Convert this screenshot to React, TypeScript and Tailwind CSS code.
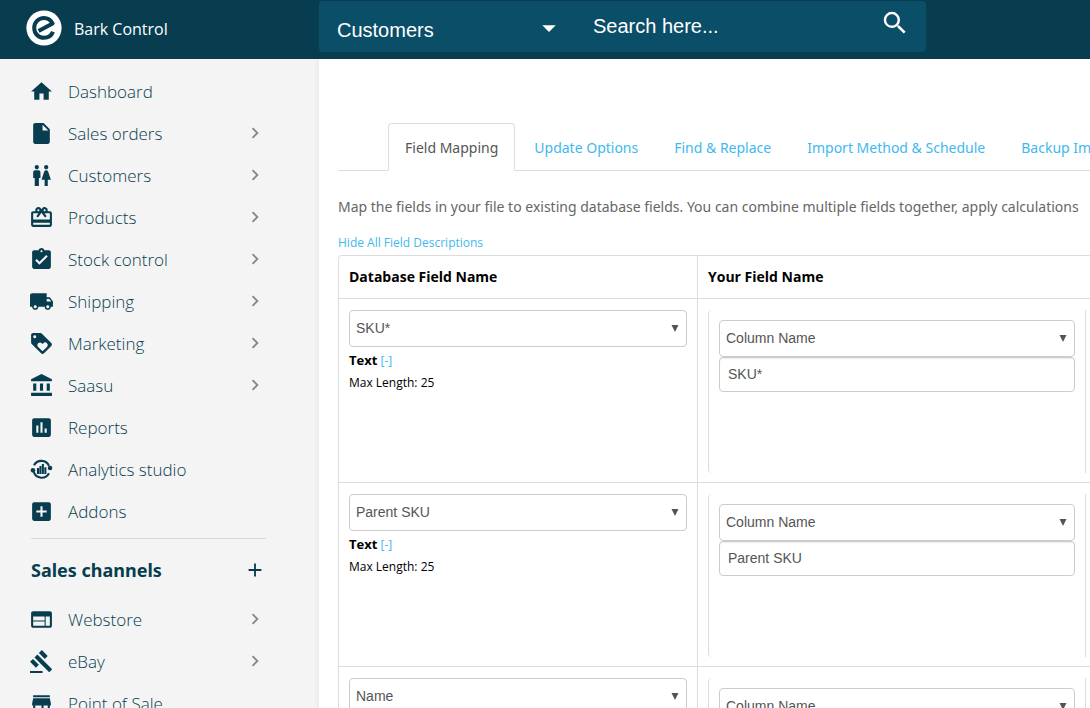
import type { ReactNode } from 'react';
import type { IconType } from 'react-icons';
import {
  MdAccountBalance,
  MdAdd,
  MdAddBox,
  MdArrowDropDown,
  MdAssessment,
  MdAssignmentTurnedIn,
  MdGavel,
  MdHome,
  MdInsertDriveFile,
  MdKeyboardArrowRight,
  MdLocalShipping,
  MdLoyalty,
  MdRedeem,
  MdSearch,
  MdStore,
  MdWc,
  MdWeb,
} from 'react-icons/md';

type NavItem = {
  label: string;
  icon: IconType | typeof AnalyticsIcon;
  expandable?: boolean;
};

const AnalyticsIcon = ({ className }: { className?: string }) => (
  <svg viewBox="0 0 24 24" className={className} aria-hidden>
    <g fill="none" stroke="currentColor" strokeWidth="2">
      <path d="M4.8 7.9A8 8 0 0 1 19.2 8.6" />
      <path d="M19.2 15.6A8 8 0 0 1 4.6 14.6" />
    </g>
    <circle cx="3.8" cy="12.8" r="2.2" fill="currentColor" />
    <circle cx="20.2" cy="10.6" r="2.2" fill="currentColor" />
    <path
      fill="currentColor"
      d="M7.6 10.6h2.1v5.8H7.6zM10 8.6h1.9v7.8H10zM12.3 6.6h2v9.8h-2zM14.7 9.8h2v6.6h-2z"
    />
  </svg>
);

const MAIN_NAV: NavItem[] = [
  { label: 'Dashboard', icon: MdHome },
  { label: 'Sales orders', icon: MdInsertDriveFile, expandable: true },
  { label: 'Customers', icon: MdWc, expandable: true },
  { label: 'Products', icon: MdRedeem, expandable: true },
  { label: 'Stock control', icon: MdAssignmentTurnedIn, expandable: true },
  { label: 'Shipping', icon: MdLocalShipping, expandable: true },
  { label: 'Marketing', icon: MdLoyalty, expandable: true },
  { label: 'Saasu', icon: MdAccountBalance, expandable: true },
  { label: 'Reports', icon: MdAssessment },
  { label: 'Analytics studio', icon: AnalyticsIcon },
  { label: 'Addons', icon: MdAddBox },
];

const CHANNEL_NAV: NavItem[] = [
  { label: 'Webstore', icon: MdWeb, expandable: true },
  { label: 'eBay', icon: MdGavel, expandable: true },
  { label: 'Point of Sale', icon: MdStore },
];

const TABS = [
  'Field Mapping',
  'Update Options',
  'Find & Replace',
  'Import Method & Schedule',
  'Backup Import Data',
];

const FIELDS = ['SKU*', 'Parent SKU', 'Name'];

const Logo = () => (
  <svg viewBox="0 0 36 36" className="size-9 shrink-0" aria-hidden>
    <circle cx="18" cy="18" r="17.6" fill="#fff" />
    <path
      d="M12.6 20.9L26.6 13.4C24.4 9.6 21.4 8 18 8C12.4 8 8.2 12.4 8.2 18C8.2 23.6 12.4 27.8 18 27.8C22.2 27.8 25.6 25.4 27 21.8"
      fill="none"
      stroke="#073d4f"
      strokeWidth="4"
      strokeLinejoin="round"
    />
  </svg>
);

const NavList = ({ items }: { items: NavItem[] }) => (
  <ul>
    {items.map(({ label, icon: Icon, expandable }) => (
      <li key={label}>
        <a href="#" className="flex h-[42px] items-center text-[#073d4f]">
          <Icon className="size-[25px] shrink-0" />
          <span className="ml-[14px] flex-1 pt-0.5 text-[17px] font-light">{label}</span>
          {expandable && <MdKeyboardArrowRight className="size-[22px] text-[#888]" />}
        </a>
      </li>
    ))}
  </ul>
);

const SelectBox = ({ label, value }: { label: string; value: string }) => (
  <div className="relative">
    <select
      aria-label={label}
      defaultValue={value}
      className="block h-[37px] w-full appearance-none rounded border border-[#ccc] bg-white pb-0.5 pl-1.5 font-['Liberation_Sans',Arial,sans-serif] text-sm text-[#555]"
    >
      <option>{value}</option>
    </select>
    <svg
      viewBox="0 0 8 7"
      className="pointer-events-none absolute top-[15px] right-2 h-[7px] w-2 fill-[#555]"
      aria-hidden
    >
      <path d="M.5 0h7L4 7z" />
    </svg>
  </div>
);

const HeaderCell = ({ children }: { children: ReactNode }) => (
  <th className="h-[43px] border-b border-l border-[#ddd] px-[10px] text-left text-sm font-bold first:rounded-tl">
    {children}
  </th>
);

const FieldRow = ({ field }: { field: string }) => (
  <tr className="align-top">
    <td className="border-b border-l border-[#ddd] px-[10px] pt-[11px] text-xs">
      <SelectBox label="Database field" value={field} />
      <p className="mt-0.5 leading-[22px]">
        <strong className="text-[13px]">Text</strong>{' '}
        <a href="#" className="text-[#42b8ee]">
          [-]
        </a>
      </p>
      <p className="leading-[22px]">Max Length: 25</p>
    </td>
    <td className="border-b border-l border-[#ddd] pt-[11px] pb-[9px] pl-[10px]">
      <div className="flex h-[163px]">
        <div className="flex-1 rounded-l border-l border-[#ddd] px-[10px] pt-[10px]">
          <SelectBox label="Your field type" value="Column Name" />
          <input
            type="text"
            aria-label="Your field name"
            defaultValue={field}
            className="block h-[35px] w-full rounded border border-[#ccc] px-2 pb-0.5 font-['Liberation_Sans',Arial,sans-serif] text-sm text-[#555] shadow-[inset_0_1px_1px_rgba(0,0,0,0.075)]"
          />
        </div>
        <div className="w-[5px] border-l border-[#ddd]" />
      </div>
    </td>
  </tr>
);

export default function App() {
  return (
    <div className="flex h-screen flex-col overflow-hidden bg-white font-['Open_Sans','Noto_Sans',sans-serif] text-black">
      <header className="flex h-[59px] shrink-0 bg-[#073d4f]">
        <div className="flex w-[319px] shrink-0 items-center gap-3 pb-[3px] pl-[26px] text-white">
          <Logo />
          <span className="pt-0.5 text-base">Bark Control</span>
        </div>
        <form className="mt-px flex h-[51px] w-[607px] rounded bg-[#0b4e67] font-['Liberation_Sans',Arial,sans-serif] text-xl text-white">
          <div className="relative w-[256px]">
            <select
              aria-label="Search in"
              defaultValue="Customers"
              className="h-full w-full appearance-none pt-[6px] pl-[18px] focus:outline-none"
            >
              <option>Customers</option>
            </select>
            <MdArrowDropDown className="pointer-events-none absolute top-[11px] right-[10px] size-8" />
          </div>
          <input
            type="text"
            aria-label="Search"
            placeholder="Search here..."
            className="min-w-0 flex-1 pb-0.5 pl-[18px] placeholder:text-white focus:outline-none"
          />
          <button type="button" aria-label="Search" className="pr-4 pb-2">
            <MdSearch className="size-[30px]" />
          </button>
        </form>
      </header>

      <div className="flex min-h-0 flex-1">
        <nav className="w-[319px] shrink-0 overflow-hidden bg-[#f4f4f4] pt-[11px] pr-[53px] pl-[29px] shadow-[inset_-6px_0_4px_-4px_rgba(0,0,0,0.04)]">
          <NavList items={MAIN_NAV} />
          <hr className="mt-[6px] ml-0.5 border-[#d8d8d8]" />
          <div className="flex h-[59px] items-center justify-between pt-0.5 pl-0.5 text-[#073d4f]">
            <h2 className="font-['Noto_Sans','Open_Sans',sans-serif] text-lg font-bold">
              Sales channels
            </h2>
            <button type="button" aria-label="Add sales channel">
              <MdAdd className="size-[22px]" />
            </button>
          </div>
          <NavList items={CHANNEL_NAV} />
        </nav>

        <main className="min-w-0 flex-1 overflow-hidden pt-16 pl-[19px]">
          <div
            role="tablist"
            className="flex border-b border-[#ddd] pl-[50px] font-['Noto_Sans','Open_Sans',sans-serif] whitespace-nowrap"
          >
            {TABS.map((tab, i) => (
              <button
                key={tab}
                type="button"
                role="tab"
                aria-selected={i === 0}
                className="mr-0.5 -mb-px h-12 shrink-0 rounded-t border border-transparent px-4 pt-0.5 text-sm text-[#42b8ee] aria-selected:border-[#ddd] aria-selected:border-b-white aria-selected:bg-white aria-selected:text-[#555]"
              >
                {tab}
              </button>
            ))}
          </div>

          <p className="mt-6 font-['Noto_Sans','Open_Sans',sans-serif] text-sm leading-6 whitespace-nowrap text-[#666]">
            Map the fields in your file to existing database fields. You can combine multiple fields
            together, apply calculations
          </p>
          <a href="#" className="mt-[14px] block text-xs leading-5 text-[#42b8ee]">
            Hide All Field Descriptions
          </a>

          <table className="mt-0.5 w-full table-fixed border-separate border-spacing-0 rounded-tl border-t border-[#ddd]">
            <colgroup>
              <col className="w-[359px]" />
              <col />
            </colgroup>
            <thead>
              <tr>
                <HeaderCell>Database Field Name</HeaderCell>
                <HeaderCell>Your Field Name</HeaderCell>
              </tr>
            </thead>
            <tbody>
              {FIELDS.map((field) => (
                <FieldRow key={field} field={field} />
              ))}
            </tbody>
          </table>
        </main>
      </div>
    </div>
  );
}
